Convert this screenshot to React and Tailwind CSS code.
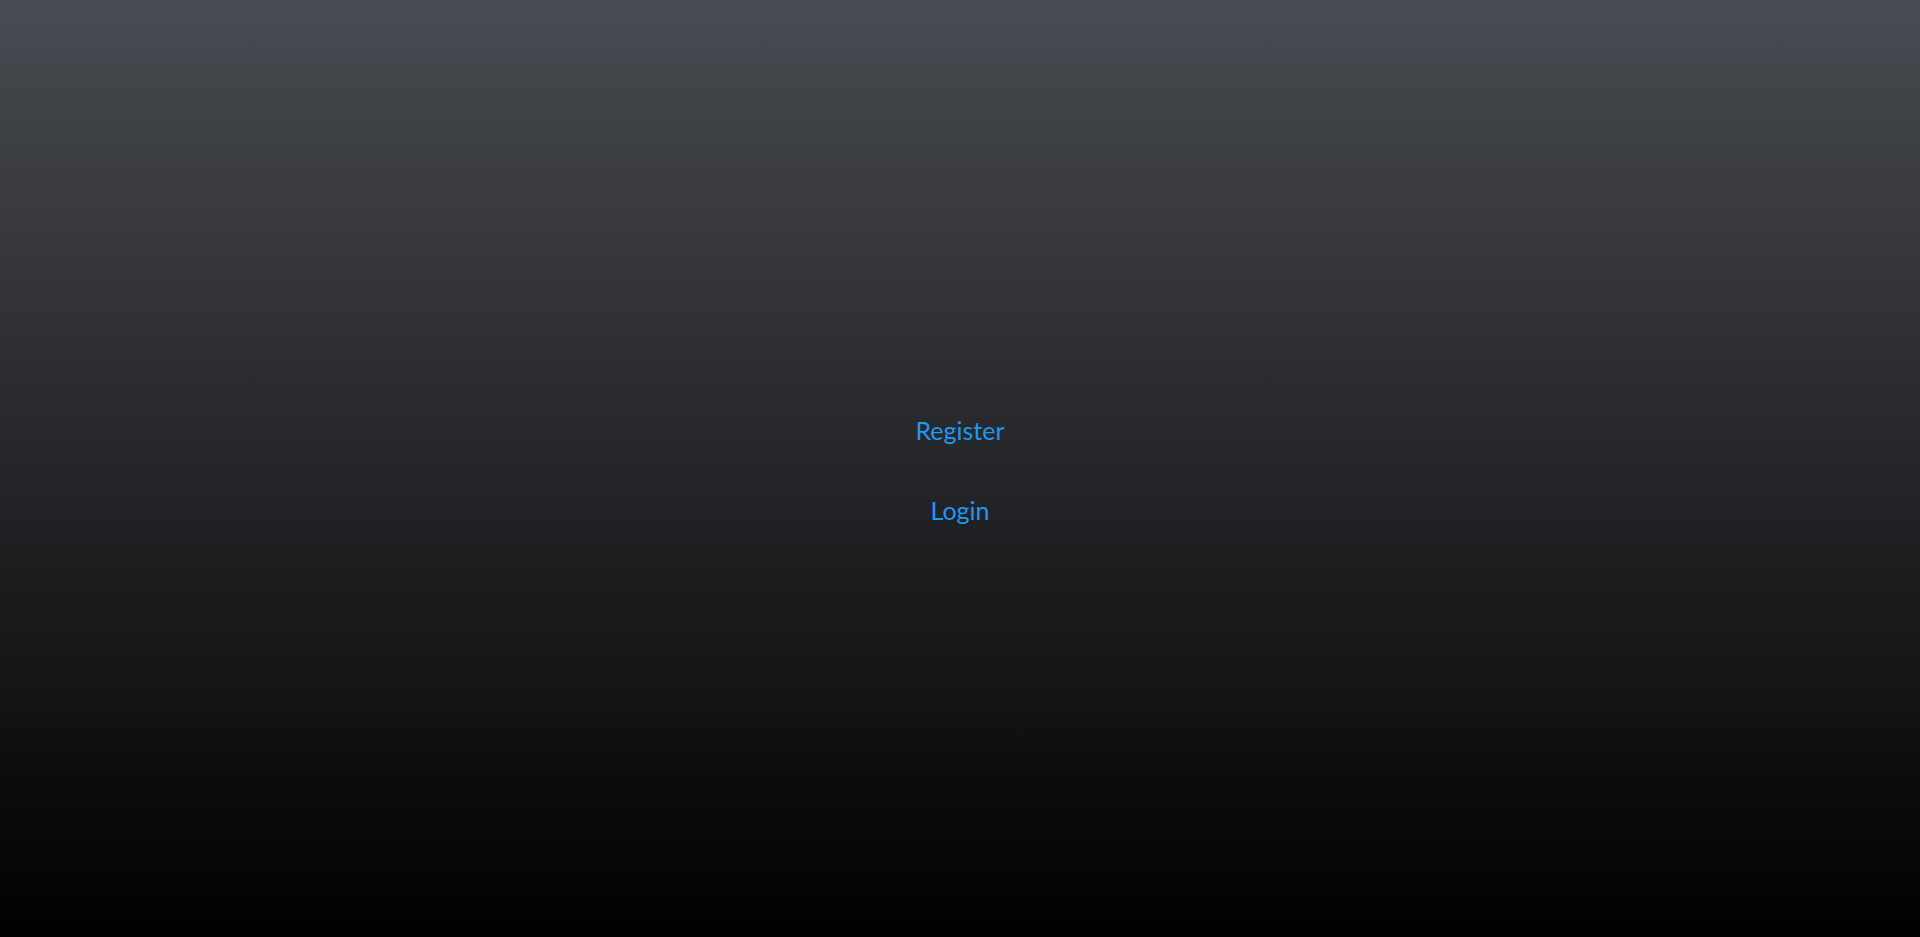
import React from "react";

const App = () => {
  return (
    <div
      className="h-[937px] w-full flex flex-col items-center justify-center gap-[51px] pt-[3px] bg-[linear-gradient(to_bottom,#484b51,#000000)]"
      style={{ fontFamily: "Lato, 'Open Sans', sans-serif" }}
    >
      <a href="#" className="text-[25px] leading-[29px] text-[#2196f3]">
        Register
      </a>
      <a href="#" className="text-[25px] leading-[29px] text-[#2196f3]">
        Login
      </a>
    </div>
  );
};

export default App;
